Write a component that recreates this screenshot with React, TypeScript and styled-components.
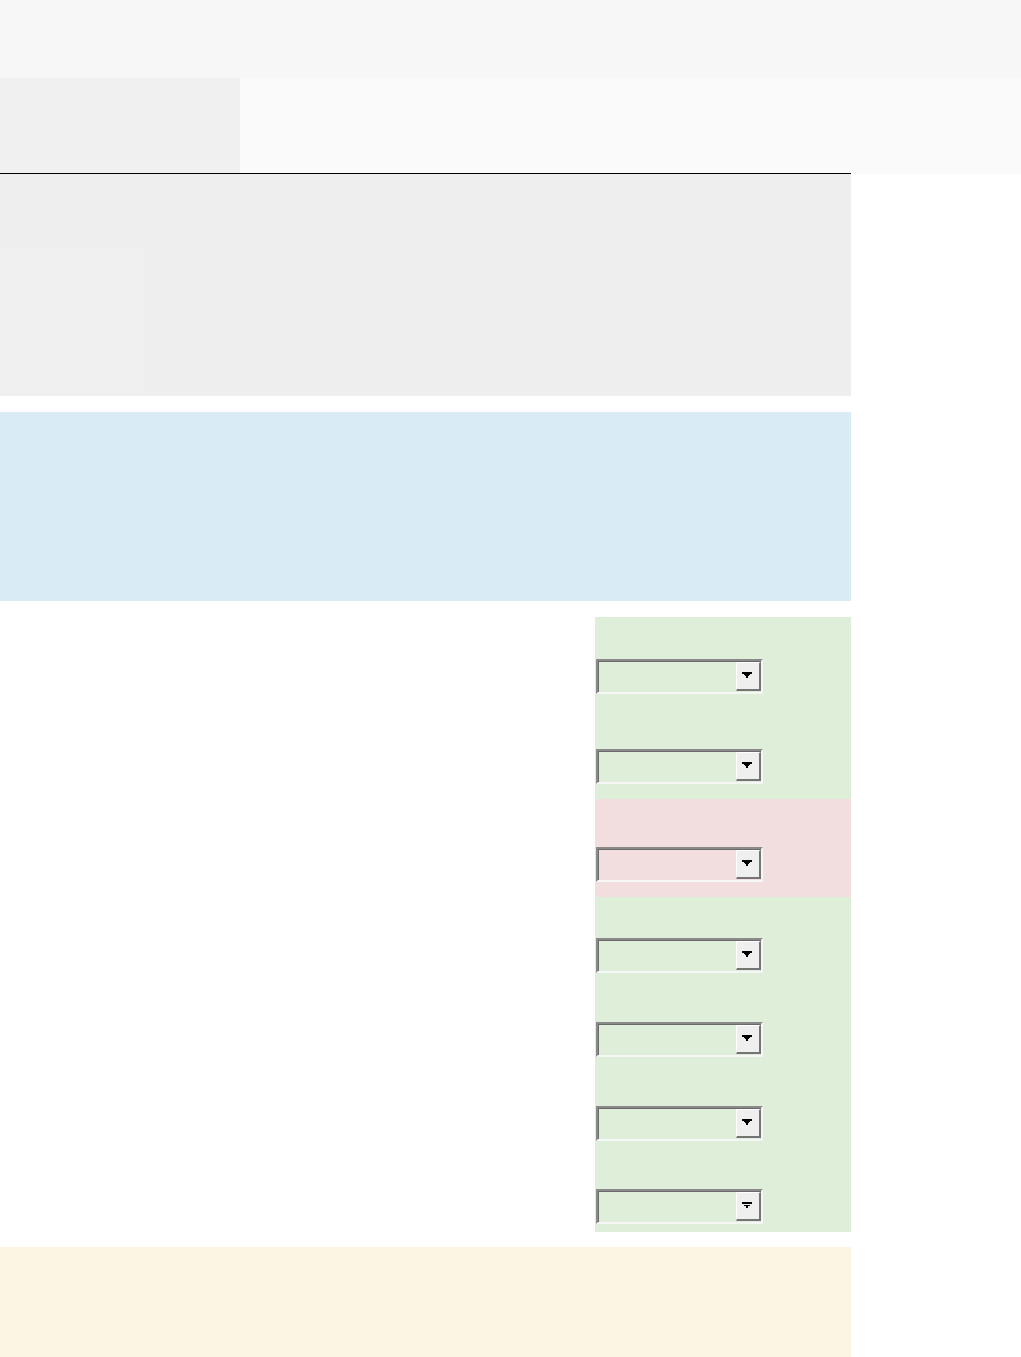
import React from "react";
import styled, { createGlobalStyle } from "styled-components";

const Global = createGlobalStyle`
  html, body { margin: 0; padding: 0; background: #ffffff; }
  body { font-family: "Liberation Sans", Arial, sans-serif; font-size: 14px; color: #333; }
`;

const Page = styled.div`
  width: 1021px;
  display: flex;
  flex-direction: column;
`;

const TopBar = styled.header`
  height: 78px;
  background: #f7f7f7;
`;

const NavRow = styled.nav`
  height: 96px;
  display: flex;
`;

const Brand = styled.div`
  width: 240px;
  background: #f0f0f0;
`;

const NavFill = styled.div`
  flex: 1;
  background: #fafafa;
`;

const Main = styled.main`
  width: 851px;
  display: flex;
  flex-direction: column;
`;

const Hero = styled.section`
  margin-top: -1px;
  border-top: 1px solid #000;
  box-sizing: border-box;
  height: 223px;
  background: #eeeeee;
  display: flex;
  flex-direction: column;
  justify-content: flex-end;
  padding-bottom: 5px;
`;

const HeroThumb = styled.div`
  width: 144px;
  height: 144px;
  background: #f0f0f0;
`;

const InfoBox = styled.section`
  margin-top: 16px;
  height: 189px;
  background: #d9ecf6;
`;

const FormRow = styled.div`
  margin-top: 16px;
  display: flex;
  justify-content: flex-end;
`;

const Side = styled.aside`
  width: 256px;
  display: flex;
  flex-direction: column;
`;

const Panel = styled.div<{ $tone: "ok" | "bad"; $pb: number }>`
  background: ${(p) => (p.$tone === "ok" ? "#dfeed8" : "#f2dedf")};
  padding: 0 0 ${(p) => p.$pb}px 1px;
  display: flex;
  flex-direction: column;
`;

const Field = styled.div<{ $gap: number }>`
  display: flex;
  flex-direction: column;
  padding-top: ${(p) => p.$gap}px;
`;

const SelectBox = styled.div`
  box-sizing: border-box;
  width: 167px;
  height: 35px;
  border-style: solid;
  border-width: 2px;
  border-color: #8a8a8a #f6f6f6 #f6f6f6 #8a8a8a;
  box-shadow: inset 1px 1px 0 #6a6a6a;
  padding: 1px 0 1px 2px;
  display: flex;
  justify-content: flex-end;
`;

const DropButton = styled.div`
  box-sizing: border-box;
  width: 25px;
  height: 29px;
  background: #efefef;
  border-style: solid;
  border-width: 1px 2px 2px 1px;
  border-color: #fff #747474 #747474 #fff;
  display: flex;
  align-items: center;
  justify-content: center;
  padding: 0 2px 2px 0;
`;

const Arrow = ({ alt }: { alt?: boolean }) =>
  alt ? (
    <svg width="10" height="7" viewBox="0 0 10 7" shapeRendering="crispEdges">
      <rect x="0" y="0" width="10" height="2" fill="#000" />
      <rect x="2" y="3" width="6" height="1" fill="#000" />
      <rect x="4" y="4" width="2" height="2" fill="#000" />
    </svg>
  ) : (
    <svg width="10" height="6" viewBox="0 0 10 6" shapeRendering="crispEdges">
      <polygon
        points="0,0 10,0 10,2 8,2 8,3 7,3 7,4 6,4 6,6 4,6 4,4 3,4 3,3 2,3 2,2 0,2"
        fill="#000"
      />
    </svg>
  );

const Select = ({ alt }: { alt?: boolean }) => (
  <SelectBox>
    <DropButton>
      <Arrow alt={alt} />
    </DropButton>
  </SelectBox>
);

const Notice = styled.section`
  margin-top: 15px;
  height: 110px;
  background: #fcf5e3;
`;

export default function App() {
  return (
    <>
      <Global />
      <Page>
        <TopBar />
        <NavRow>
          <Brand />
          <NavFill />
        </NavRow>
        <Main>
          <Hero>
            <HeroThumb />
          </Hero>
          <InfoBox />
          <FormRow>
            <Side>
              <Panel $tone="ok" $pb={15}>
                <Field $gap={42}>
                  <Select />
                </Field>
                <Field $gap={55}>
                  <Select />
                </Field>
              </Panel>
              <Panel $tone="bad" $pb={15}>
                <Field $gap={48}>
                  <Select />
                </Field>
              </Panel>
              <Panel $tone="ok" $pb={8}>
                <Field $gap={41}>
                  <Select />
                </Field>
                <Field $gap={49}>
                  <Select />
                </Field>
                <Field $gap={49}>
                  <Select />
                </Field>
                <Field $gap={48}>
                  <Select alt />
                </Field>
              </Panel>
            </Side>
          </FormRow>
          <Notice />
        </Main>
      </Page>
    </>
  );
}
